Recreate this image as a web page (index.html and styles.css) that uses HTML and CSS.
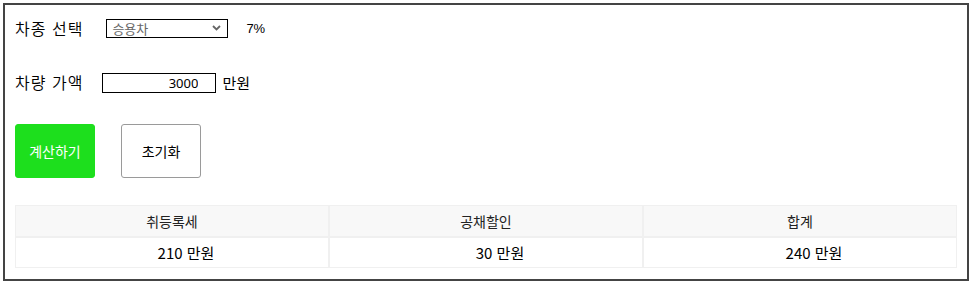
FILE: index.html
```html
<!DOCTYPE html>
<html lang="ko">
<head>
<meta charset="utf-8">
<title>취등록세 계산기</title>
<link rel="stylesheet" href="styles.css">
</head>
<body>
<div class="calc">
  <div class="row row-type">
    <span class="label">차종 선택</span>
    <span class="select-wrap">
      <select class="select">
        <option>승용차</option>
        <option>승합차</option>
        <option>화물차</option>
      </select>
      <svg class="chev" width="9" height="6" viewBox="0 0 9 6"><path d="M1 1 L4.5 4.5 L8 1" fill="none" stroke="#666" stroke-width="1.8"/></svg>
    </span>
    <span class="rate">7%</span>
  </div>
  <div class="row row-price">
    <span class="label">차량 가액</span>
    <input class="price" type="text" value="3000">
    <span class="unit">만원</span>
  </div>
  <div class="buttons">
    <button class="btn btn-calc">계산하기</button>
    <button class="btn btn-reset">초기화</button>
  </div>
  <table class="result">
    <thead>
      <tr><th>취등록세</th><th>공채할인</th><th>합계</th></tr>
    </thead>
    <tbody>
      <tr><td>210 만원</td><td>30 만원</td><td>240 만원</td></tr>
    </tbody>
  </table>
</div>
</body>
</html>
```

FILE: styles.css
```css
html, body {
  margin: 0;
  padding: 0;
  background: #fff;
}
body {
  font-family: "Noto Sans CJK KR", "Noto Sans", sans-serif;
  color: #000;
}
.calc {
  margin: 3px 3px 0 3px;
  border: 2px solid #444;
  padding: 10px 10px 10px 10px;
  height: 254px;
}
.row {
  display: flex;
  align-items: center;
  height: 27px;
}
.row-price {
  margin-top: 27px;
}
.label {
  font-size: 16px;
  letter-spacing: 1px;
  line-height: 27px;
  font-weight: 350;
}
.row-type .label {
  margin-right: 23px;
}
.row-price .label {
  margin-right: 19px;
}
.select-wrap {
  position: relative;
  display: inline-flex;
}
.select {
  appearance: none;
  -webkit-appearance: none;
  width: 122px;
  height: 19px;
  border: 1px solid #000;
  border-radius: 0;
  background: #fff;
  padding: 0 0 0 5px;
  margin: 0;
  font-family: inherit;
  font-size: 13px;
  color: #666;
  line-height: 17px;
  outline: none;
}
.chev {
  position: absolute;
  right: 7px;
  top: 6px;
  pointer-events: none;
}
.rate {
  margin-left: 18px;
  font-size: 13px;
  font-family: "Liberation Sans", sans-serif;
}
.price {
  box-sizing: border-box;
  width: 114px;
  height: 20px;
  border: 1px solid #000;
  border-radius: 0;
  padding: 0 17px 0 2px;
  margin: 0;
  text-align: right;
  font-family: "Noto Sans", sans-serif;
  font-size: 13px;
  color: #000;
  outline: none;
}
.unit {
  margin-left: 6px;
  font-size: 15px;
}
.buttons {
  display: flex;
  gap: 26px;
  margin-top: 28px;
}
.btn {
  width: 80px;
  height: 54px;
  border-radius: 3px;
  font-family: inherit;
  font-size: 14px;
  padding: 0;
  margin: 0;
  cursor: pointer;
}
.btn-calc {
  background: #1ddf1d;
  border: 1px solid #1ddf1d;
  color: #fff;
}
.btn-reset {
  background: #fff;
  border: 1px solid #9a9a9a;
  color: #000;
}
.result {
  margin-top: 27px;
  width: 100%;
  border-collapse: separate;
  border-spacing: 0;
  table-layout: fixed;
  font-size: 14px;
}
.result th, .result td {
  border: 1px solid #f0f0f0;
  text-align: center;
  font-weight: normal;
  padding: 0;
}
.result th {
  height: 30px;
  background: #f8f8f8;
  color: #222;
}
.result td {
  height: 29px;
  background: #fff;
  padding-left: 28px;
  font-size: 15px;
}
```
